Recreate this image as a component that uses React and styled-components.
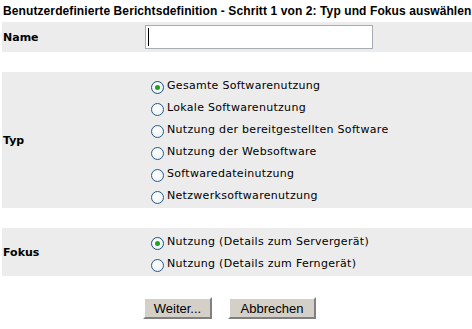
import React from 'react';
import styled, { createGlobalStyle } from 'styled-components';

const GlobalStyle = createGlobalStyle`
  html, body {
    margin: 0;
    padding: 0;
    background: #ffffff;
  }
  body {
    font-family: 'DejaVu Sans', Verdana, sans-serif;
    color: #000000;
  }
`;

const Page = styled.div`
  width: 472px;
  padding-top: 4px;
  display: flex;
  flex-direction: column;
`;

const Title = styled.h1`
  margin: 0 0 0 3px;
  font-family: 'Liberation Sans', Arial, sans-serif;
  font-weight: 700;
  font-size: 12px;
  line-height: 14px;
  white-space: nowrap;
  letter-spacing: 0.1px;
`;

const Section = styled.div`
  margin-left: 2px;
  margin-top: ${(p) => p.$gap}px;
  min-height: ${(p) => p.$h}px;
  background: #ececec;
  display: grid;
  grid-template-columns: 143px 1fr;
  align-items: center;
`;

const Label = styled.div`
  padding-left: 1px;
  font-family: 'DejaVu Sans', Verdana, sans-serif;
  font-weight: 700;
  font-size: 11px;
`;

const InputWrap = styled.div`
  position: relative;
  width: 228px;
  height: 24px;
`;

const TextInput = styled.input`
  box-sizing: border-box;
  width: 100%;
  height: 100%;
  border: 1px solid #a5acb2;
  background: #ffffff;
  outline: none;
  padding: 0 3px;
  font-size: 12px;
`;

const Caret = styled.span`
  position: absolute;
  left: 3px;
  top: 3px;
  width: 1px;
  height: 18px;
  background: #000000;
`;

const Options = styled.div`
  display: flex;
  flex-direction: column;
  padding: 2px 0;
  margin-left: 6px;
`;

const Option = styled.label`
  display: flex;
  align-items: center;
  height: 22px;
  font-family: 'DejaVu Sans', Verdana, sans-serif;
  font-size: 11px;
  letter-spacing: 0.3px;
  gap: 3px;
`;

const Radio = styled.span`
  box-sizing: border-box;
  width: 13px;
  height: 13px;
  margin-top: 4px;
  border-radius: 50%;
  border: 1px solid ${(p) => (p.$checked ? '#1c5180' : '#2b5a87')};
  background: radial-gradient(circle at 40% 40%, #ffffff 0%, #e9ecef 100%);
  display: flex;
  align-items: center;
  justify-content: center;

  &::after {
    content: '';
    width: 5px;
    height: 5px;
    border-radius: 50%;
    background: ${(p) => (p.$checked ? '#21a121' : 'transparent')};
  }
`;

const Buttons = styled.div`
  display: flex;
  gap: 16px;
  margin: 21px 0 0 143px;
`;

const Button = styled.button`
  box-sizing: border-box;
  height: 22px;
  padding: 0;
  width: ${(p) => p.$w}px;
  background: #d4d0c8;
  border: 2px solid;
  border-color: #ffffff #808080 #808080 #ffffff;
  font-family: 'Liberation Sans', Arial, sans-serif;
  font-size: 13px;
  color: #000000;
`;

const typOptions = [
  'Gesamte Softwarenutzung',
  'Lokale Softwarenutzung',
  'Nutzung der bereitgestellten Software',
  'Nutzung der Websoftware',
  'Softwaredateinutzung',
  'Netzwerksoftwarenutzung',
];

const fokusOptions = [
  'Nutzung (Details zum Servergerät)',
  'Nutzung (Details zum Ferngerät)',
];

export default function App() {
  return (
    <Page>
      <GlobalStyle />
      <Title>Benutzerdefinierte Berichtsdefinition - Schritt 1 von 2: Typ und Fokus auswählen</Title>

      <Section $gap={4} $h={30}>
        <Label>Name</Label>
        <InputWrap>
          <TextInput type="text" />
          <Caret />
        </InputWrap>
      </Section>

      <Section $gap={20} $h={136}>
        <Label>Typ</Label>
        <Options>
          {typOptions.map((text, i) => (
            <Option key={text}>
              <Radio $checked={i === 0} />
              {text}
            </Option>
          ))}
        </Options>
      </Section>

      <Section $gap={20} $h={48}>
        <Label>Fokus</Label>
        <Options>
          {fokusOptions.map((text, i) => (
            <Option key={text}>
              <Radio $checked={i === 0} />
              {text}
            </Option>
          ))}
        </Options>
      </Section>

      <Buttons>
        <Button $w={69}>Weiter...</Button>
        <Button $w={88}>Abbrechen</Button>
      </Buttons>
    </Page>
  );
}
